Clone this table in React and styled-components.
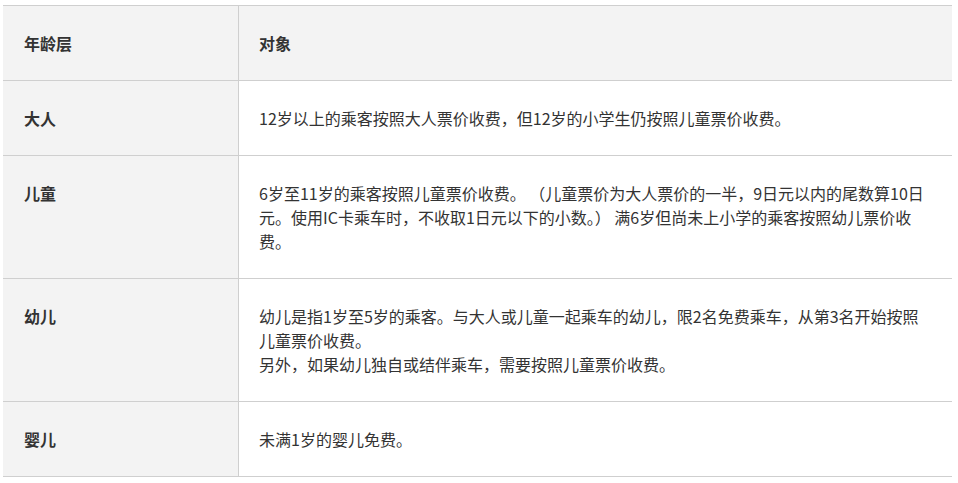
import React from "react";
import styled, { createGlobalStyle } from "styled-components";

const GlobalStyle = createGlobalStyle`
  html, body {
    margin: 0;
    padding: 0;
    background: #ffffff;
  }
  body {
    font-family: "Microsoft YaHei", "Noto Sans CJK SC", "Liberation Sans", sans-serif;
    color: #333333;
  }
`;

const Page = styled.div`
  padding: 5px 6px 0 3px;
`;

const Table = styled.div`
  border-top: 1px solid #cfcfcf;
`;

const Row = styled.div`
  display: grid;
  grid-template-columns: 236px 1fr;
  border-bottom: 1px solid #cfcfcf;
`;

const LabelCell = styled.div`
  background: #f3f3f3;
  border-right: 1px solid #cfcfcf;
  padding: 25px 20px 25px 21px;
  font-size: 16px;
  line-height: 24px;
  font-weight: bold;
  color: #333333;
`;

const TextCell = styled.div`
  background: ${(p) => (p.$head ? "#f3f3f3" : "#ffffff")};
  padding: 25px 20px;
  font-size: ${(p) => (p.$head ? "16px" : "16px")};
  font-weight: ${(p) => (p.$head ? "bold" : "normal")};
  line-height: 24px;
  color: #333333;
`;

const rows = [
  {
    label: "大人",
    text: ["12岁以上的乘客按照大人票价收费，但12岁的小学生仍按照儿童票价收费。"],
  },
  {
    label: "儿童",
    text: [
      "6岁至11岁的乘客按照儿童票价收费。 （儿童票价为大人票价的一半，9日元以内的尾数算10日元。使用IC卡乘车时，不收取1日元以下的小数。） 满6岁但尚未上小学的乘客按照幼儿票价收费。",
    ],
  },
  {
    label: "幼儿",
    text: [
      "幼儿是指1岁至5岁的乘客。与大人或儿童一起乘车的幼儿，限2名免费乘车，从第3名开始按照儿童票价收费。",
      "另外，如果幼儿独自或结伴乘车，需要按照儿童票价收费。",
    ],
  },
  {
    label: "婴儿",
    text: ["未满1岁的婴儿免费。"],
  },
];

const App = () => {
  return (
    <>
      <GlobalStyle />
      <Page>
        <Table>
          <Row>
            <LabelCell>年龄层</LabelCell>
            <TextCell $head>对象</TextCell>
          </Row>
          {rows.map((r) => (
            <Row key={r.label}>
              <LabelCell>{r.label}</LabelCell>
              <TextCell>
                {r.text.map((t, i) => (
                  <React.Fragment key={i}>
                    {i > 0 && <br />}
                    {t}
                  </React.Fragment>
                ))}
              </TextCell>
            </Row>
          ))}
        </Table>
      </Page>
    </>
  );
};

export default App;
